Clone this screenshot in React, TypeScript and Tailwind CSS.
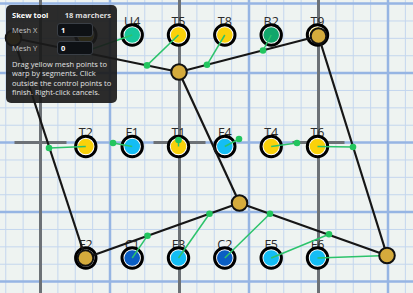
import React from "react";

const S = 17.375;
const MAJ = 69.5;
const GX0 = 40.5;
const GY0 = 3.6;

const COLORS: Record<string, string> = {
  T: "#fad10a",
  F: "#14bdf4",
  C: "#0a5ec4",
  U: "#18c79b",
  B: "#12a66b",
  H: "#fad10a",
};

type M = { id: string; x: number; y: number };

const cols = [85.8, 132.2, 178.5, 224.8, 271.2, 317.5];
const rows = [35, 146.5, 258];
const names = [
  ["H", "U4", "T5", "T8", "B2", "T9"],
  ["T2", "F1", "T1", "F4", "T4", "T6"],
  ["F2", "C1", "F3", "C2", "F5", "F6"],
];
const marchers: M[] = names.flatMap((r, ri) =>
  r.map((id, ci) => ({ id, x: cols[ci], y: rows[ri] }))
);

const A = [13.5, 38];
const B = [179, 72];
const C = [318.5, 36];
const D = [387, 255.5];
const E = [239.5, 203];
const F = [85.5, 258];

const mesh = [
  [A, B],
  [B, C],
  [B, E],
  [C, D],
  [E, D],
  [E, F],
  [A, F],
];

const links: [string, number, number][] = [
  ["U4", 83, 52.3],
  ["T5", 147, 65.4],
  ["T8", 207, 64.8],
  ["B2", 263, 50.5],
  ["T2", 49, 148],
  ["F1", 113, 143],
  ["T1", 178.5, 140],
  ["F4", 239, 139],
  ["T4", 297, 143],
  ["T6", 353, 147],
  ["C1", 147.5, 235.7],
  ["F3", 209.5, 213.8],
  ["C2", 270, 213.7],
  ["F5", 329, 234.3],
  ["F6", 387, 255.5],
];

function Field() {
  const minorV: number[] = [];
  for (let k = -3; k < 24; k++) minorV.push(GX0 + k * S);
  const minorH: number[] = [];
  for (let k = 0; k < 18; k++) minorH.push(GY0 + k * S);
  const majV = [0, 1, 2, 3, 4, 5].map((m) => GX0 + m * MAJ);
  const majH = [0, 1, 2, 3, 4].map((j) => GY0 + j * MAJ);
  const byId = Object.fromEntries(marchers.map((m) => [m.id, m]));
  return (
    <svg width={413} height={293} viewBox="0 0 413 293" className="block">
      <rect width={413} height={293} fill="#eef3f1" />
      {minorV.map((x, i) => (
        <line key={"mv" + i} x1={x} y1={0} x2={x} y2={293} stroke="#c4d6ee" strokeWidth={1} />
      ))}
      {minorH.map((y, i) => (
        <line key={"mh" + i} x1={0} y1={y} x2={413} y2={y} stroke="#c4d6ee" strokeWidth={1} />
      ))}
      {majH.map((y, i) => (
        <line key={"Mh" + i} x1={0} y1={y} x2={413} y2={y} stroke="#96b5e3" strokeWidth={2.5} />
      ))}
      {majV.map((x, i) =>
        i % 2 === 1 ? (
          <line key={"Mv" + i} x1={x} y1={0} x2={x} y2={293} stroke="#96b5e3" strokeWidth={2.5} />
        ) : null
      )}
      {majV.map((x, i) =>
        i % 2 === 0 ? (
          <g key={"G" + i}>
            <line x1={x} y1={0} x2={x} y2={293} stroke="#6c7176" strokeWidth={3} />
            <line x1={x - 26} y1={GY0 + 2 * MAJ} x2={x + 26} y2={GY0 + 2 * MAJ} stroke="#6c7176" strokeWidth={3} />
          </g>
        ) : null
      )}
      {marchers
        .filter((m) => m.id !== "H")
        .map((m) => (
          <text
            key={"t" + m.id}
            x={m.x}
            y={m.y - 9.5}
            textAnchor="middle"
            fontSize={12.5}
            fill="#2b2b2b"
            style={{ fontFamily: '"Open Sans", "Noto Sans", sans-serif' }}
          >
            {m.id}
          </text>
        ))}
      {marchers.map((m) => (
        <g key={"c" + m.id}>
          <circle cx={m.x} cy={m.y} r={10.2} fill="#ffffff" stroke="#000" strokeWidth={3} />
          <circle cx={m.x} cy={m.y} r={7.8} fill={COLORS[m.id[0]]} />
        </g>
      ))}
      {mesh.map(([p, q], i) => (
        <line key={"l" + i} x1={p[0]} y1={p[1]} x2={q[0]} y2={q[1]} stroke="#161616" strokeWidth={2.2} />
      ))}
      {links.map(([id, x, y]) => {
        const m = byId[id];
        return (
          <g key={"g" + id}>
            <line x1={m.x} y1={m.y} x2={x} y2={y} stroke="#2cc36b" strokeWidth={1.5} />
            <circle cx={x} cy={y} r={3.3} fill="#22c55e" />
          </g>
        );
      })}
      {[A, B, C, D, E, F].map((p, i) => (
        <circle key={"cp" + i} cx={p[0]} cy={p[1]} r={7.8} fill="#d5ab3c" stroke="#111" strokeWidth={2} />
      ))}
    </svg>
  );
}

export default function App() {
  return (
    <div className="relative w-[413px] h-[293px] overflow-hidden bg-[#eef3f1]">
      <Field />
      <div
        className="absolute left-[6px] top-[5px] w-[111px] h-[98px] rounded-[5px] bg-[#1a1a1a]/[0.92] px-[6px] pt-[5px] text-[7.5px] leading-[10px] text-[#e6e6e6] flex flex-col"
        style={{ fontFamily: '"Open Sans", "Noto Sans", sans-serif' }}
      >
        <div className="flex justify-between items-center h-[10px] font-bold">
          <span className="text-white">Skew tool</span>
          <span className="text-[#dedede]">18 marchers</span>
        </div>
        <div className="mt-[3px] flex items-center h-[14px]">
          <span className="w-[45px] text-[#c4c4c4]">Mesh X</span>
          <div className="w-[36px] h-[14px] rounded-[3px] border border-[#3a3f46] bg-[#0e1115] flex items-center pl-[3px] font-bold text-white">
            1
          </div>
        </div>
        <div className="mt-[4px] flex items-center h-[14px]">
          <span className="w-[45px] text-[#c4c4c4]">Mesh Y</span>
          <div className="w-[36px] h-[14px] rounded-[3px] border border-[#3a3f46] bg-[#0e1115] flex items-center pl-[3px] font-bold text-white">
            0
          </div>
        </div>
        <p className="mt-[5px] w-[103px] leading-[9.4px] text-[#e2e2e2]">
          Drag yellow mesh points to warp by segments. Click outside the control points to finish. Right-click cancels.
        </p>
      </div>
    </div>
  );
}
